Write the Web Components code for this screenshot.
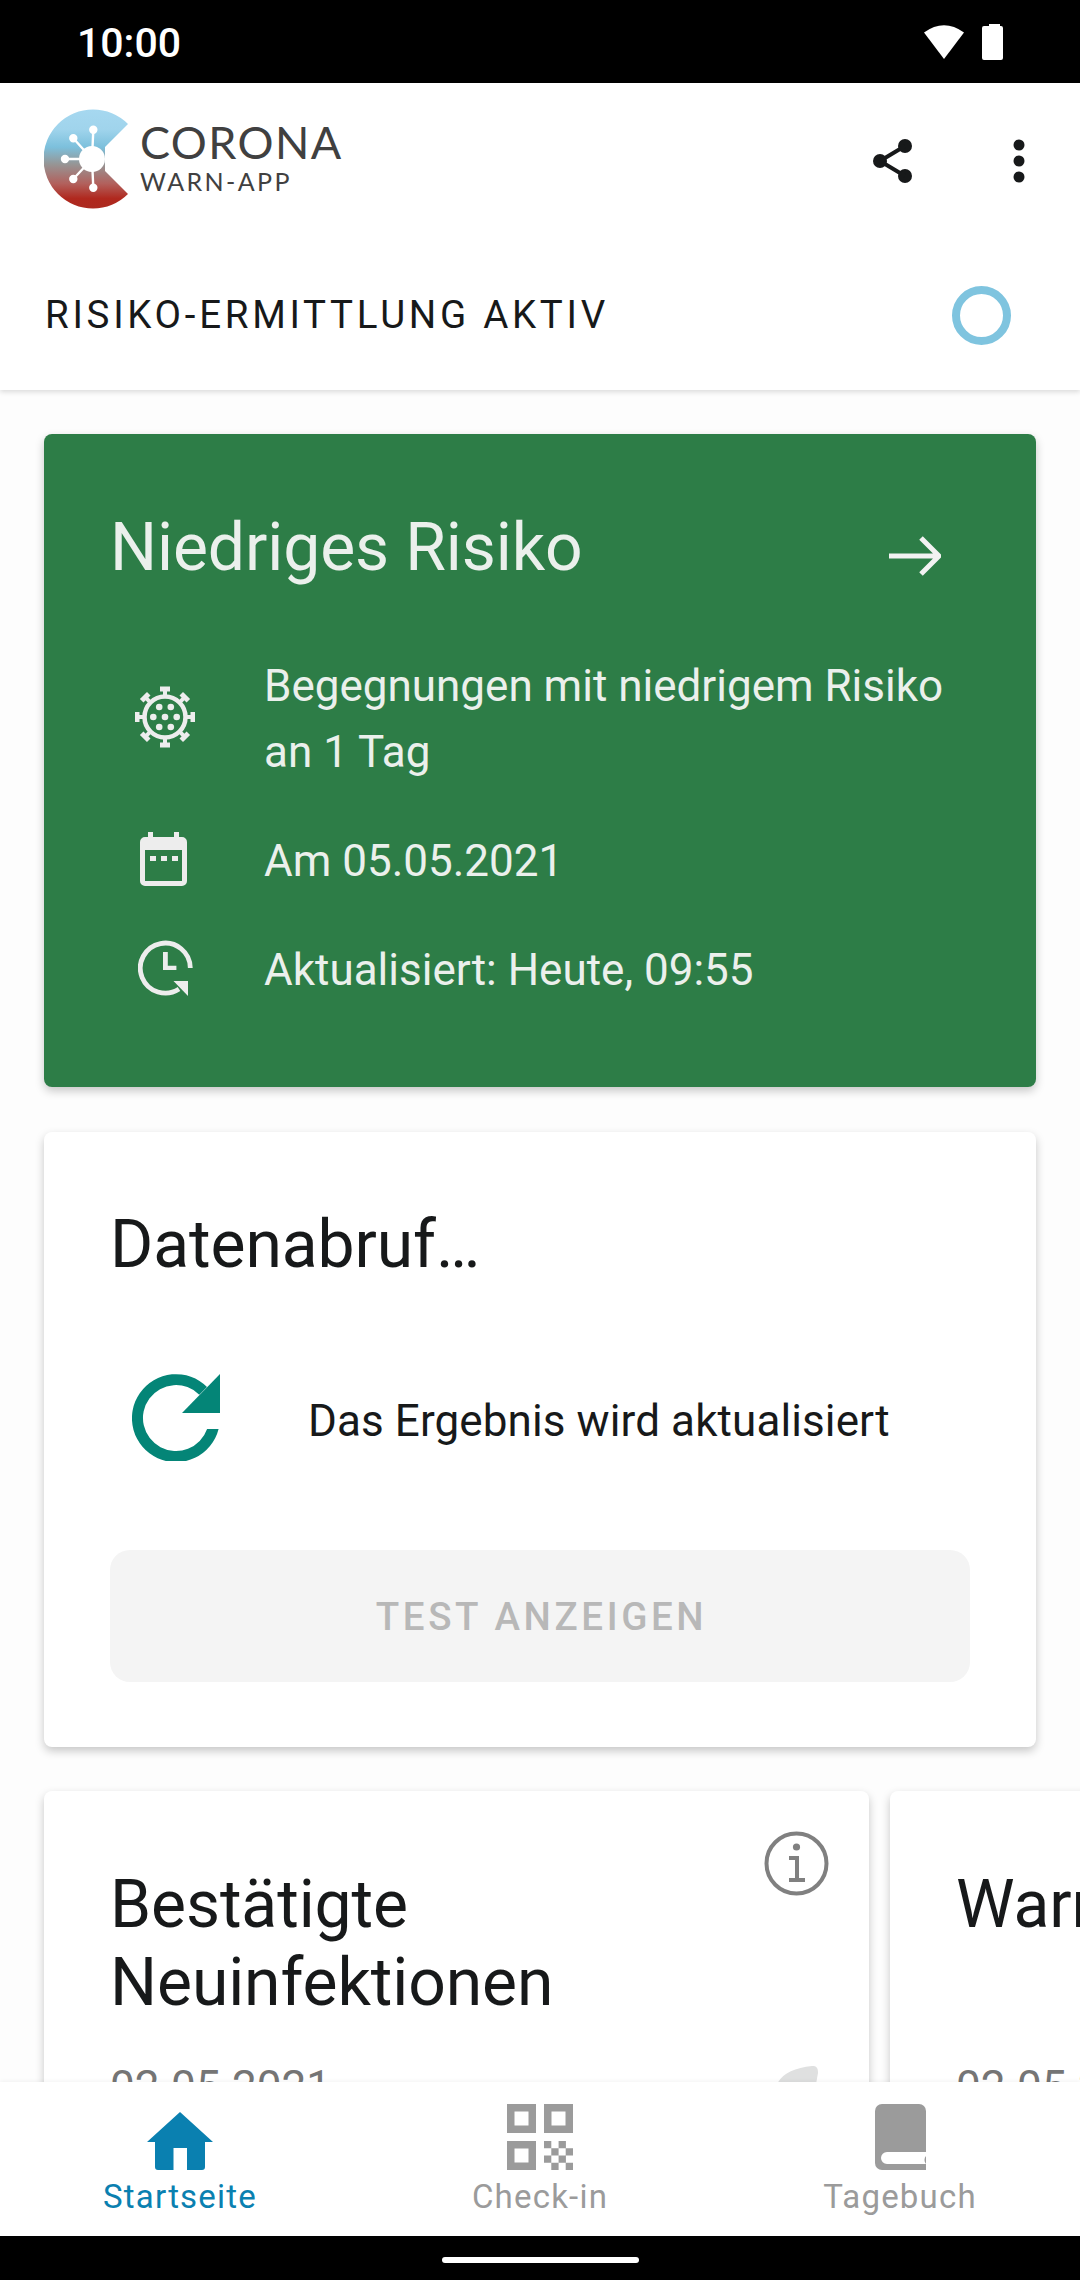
<!DOCTYPE html>
<html lang="de">
<head>
<meta charset="UTF-8">
<title>Corona-Warn-App</title>
<style>
    html, body { margin: 0; background: #000; }
    body { font-family: Roboto, "Liberation Sans", sans-serif; }
</style>
</head>
<body>

<cwa-app>
    <cwa-status-bar slot="top" time="10:00"></cwa-status-bar>
    <cwa-header slot="top" label="RISIKO-ERMITTLUNG AKTIV"></cwa-header>

    <risk-card title="Niedriges Risiko">
        <risk-row icon="virus">Begegnungen mit niedrigem Risiko<br>an 1 Tag</risk-row>
        <risk-row icon="calendar">Am 05.05.2021</risk-row>
        <risk-row icon="clock">Aktualisiert: Heute, 09:55</risk-row>
    </risk-card>

    <data-card title="Datenabruf…" text="Das Ergebnis wird aktualisiert" button="TEST ANZEIGEN"></data-card>

    <stat-row>
        <stat-card date="02.05.2021" info>Bestätigte<br>Neuinfektionen</stat-card>
        <stat-card date="02.05.2021">Warnende Personen</stat-card>
    </stat-row>

    <bottom-nav slot="bottom">
        <nav-item icon="home" active>Startseite</nav-item>
        <nav-item icon="qr">Check-in</nav-item>
        <nav-item icon="book">Tagebuch</nav-item>
    </bottom-nav>
</cwa-app>

<script>
    const ICONS = {
        virus: `<svg width="60" height="62" viewBox="-30 -31 60 62" fill="#ededed">
            <circle r="20.5" fill="none" stroke="#ededed" stroke-width="4.5"/>
            ${[0, 45, 90, 135, 180, 225, 270, 315].map(a => `<g transform="rotate(${a})"><rect x="-2" y="-27" width="4" height="7"/><rect x="-5" y="-30.5" width="10" height="5"/></g>`).join('')}
            <circle cx="-5.8" cy="-10" r="3.3"/><circle cx="5.8" cy="-10" r="3.3"/>
            <circle cx="-11.7" r="3.3"/><circle r="3.3"/><circle cx="11.7" r="3.3"/>
            <circle cx="-5.8" cy="10" r="3.3"/><circle cx="5.8" cy="10" r="3.3"/>
        </svg>`,
        calendar: `<svg width="47" height="54" viewBox="0 0 47 54" style="margin-right:3px">
            <path fill="#ededed" fill-rule="evenodd" d="M8 0h5v5h21V0h5v5h3a5 5 0 0 1 5 5v39a5 5 0 0 1-5 5H5a5 5 0 0 1-5-5V10a5 5 0 0 1 5-5h3zM5 18v31h37V18z"/>
            <path fill="#ededed" d="M10 24h6v5h-6zM21 24h6v5h-6zM32 24h6v5h-6z"/>
        </svg>`,
        clock: `<svg width="55" height="56" viewBox="0 0 55 56" fill="#ededed">
            <path fill="none" stroke="#ededed" stroke-width="4.8" d="M52.3 28A25 25 0 1 0 41 49"/>
            <path d="M50 41v15L35.5 41z"/>
            <path d="M25 12h4.8v13.7h8.6V30H25z"/>
        </svg>`,
        home: `<svg width="66" height="58" viewBox="0 0 66 58" fill="#0a80b0">
            <path d="M33 0L66 30H58V55a3 3 0 0 1-3 3H40V36H26.500V58H11a3 3 0 0 1-3-3V30H0z"/>
        </svg>`,
        qr: `<svg width="66" height="66" viewBox="0 0 66 66" fill="#9b9b9b" fill-rule="evenodd">
            <path d="M0 0h29v29H0zM7.5 7.5v14h14v-14z"/>
            <path d="M37 0h29v29H37zM44.500 7.500v14h14v-14z"/>
            <path d="M0 37h29v29H0zM7.500 44.500v14h14v-14z"/>
            <path d="M37 37h7.300v7.300H37zM51.600 37h7.300v7.300h-7.300zM44.300 44.300h7.300v7.300h-7.300zM58.700 44.300H66v7.300h-7.300zM37 51.600h7.300v7.200H37zM51.600 51.600h7.300v7.200h-7.300zM44.300 58.800h7.300V66h-7.300zM58.700 58.800H66V66h-7.300z"/>
        </svg>`,
        book: `<svg width="51" height="66" viewBox="0 0 51 66">
            <path fill="#9b9b9b" d="M7 0h37a7 7 0 0 1 7 7v59H7a7 7 0 0 1-7-7V7a7 7 0 0 1 7-7z"/>
            <path fill="#fff" d="M12 48h39v4a6 6 0 0 0 0 8v0H12a6 6 0 0 1 0-12z"/>
        </svg>`
    };

    const LOGO = `<svg width="85" height="100" viewBox="0 0 85 100">
        <defs><linearGradient id="g" x1="0" y1="0" x2="0" y2="1">
            <stop offset="0" stop-color="#a6d8f0"/><stop offset=".2" stop-color="#a0d4ec"/>
            <stop offset=".38" stop-color="#7cc0dc"/><stop offset=".55" stop-color="#969696"/>
            <stop offset=".75" stop-color="#b2605c"/><stop offset=".9" stop-color="#b0281e"/><stop offset="1" stop-color="#ac2a20"/>
        </linearGradient></defs>
        <path fill="url(#g)" d="M84 15A49.500 49.500 0 1 0 84 85L61 62V38z"/>
        <g fill="#fff" stroke="#fff" stroke-width="2.400">
            <circle cx="48" cy="50" r="13" stroke="none"/>
            <path fill="none" d="M48 50L49.300 21M48 50L29.300 29.300M48 50H21M48 50L29.300 70M48 50L49.300 79"/>
            <circle cx="49.300" cy="20.700" r="3" /><circle cx="29.300" cy="29.300" r="3"/><circle cx="21" cy="50" r="3"/>
            <circle cx="29.300" cy="70" r="3"/><circle cx="49.300" cy="78.700" r="3"/>
        </g>
    </svg>`;

    customElements.define('cwa-app', class extends HTMLElement {
        constructor() {
            super();
            this.attachShadow({mode: 'open'}).innerHTML = `
                <style>
                    :host { display: flex; flex-direction: column; height: 2280px; width: 1080px; overflow: hidden; background: #fdfdfd; }
                    main { flex: 1; min-height: 0; overflow: hidden; padding-top: 44px; display: flex; flex-direction: column; gap: 45px; }
                    .home { height: 44px; background: #000; flex: none; display: flex; justify-content: center; padding-top: 21px; box-sizing: border-box; }
                    .home i { width: 197px; height: 6px; border-radius: 3px; background: #fff; }
                </style>
                <slot name="top"></slot>
                <main><slot></slot></main>
                <slot name="bottom"></slot>
                <div class="home"><i></i></div>`;
        }
    });

    customElements.define('cwa-status-bar', class extends HTMLElement {
        constructor() {
            super();
            this.attachShadow({mode: 'open'}).innerHTML = `
                <style>
                    :host { display: flex; align-items: center; height: 83px; background: #000; color: #fff; padding: 0 77px 0 77px; box-sizing: border-box; }
                    span { font: 500 41px Roboto, sans-serif; flex: 1; margin-top: 2px; }
                    svg { display: block; margin-top: 1px; }
                </style>
                <span></span>
                <svg width="79" height="36" viewBox="0 0 79 36" fill="#fff">
                    <path d="M0 8.500Q20-6 40 8.500L20 35z"/>
                    <path d="M58 4a2 2 0 0 1 2-2h5V0h11v2h1a2 2 0 0 1 2 2v30a2 2 0 0 1-2 2H60a2 2 0 0 1-2-2z"/>
                </svg>`;
            this.shadowRoot.querySelector('span').textContent = this.getAttribute('time');
        }
    });

    customElements.define('cwa-header', class extends HTMLElement {
        constructor() {
            super();
            this.attachShadow({mode: 'open'}).innerHTML = `
                <style>
                    :host { display: block; background: #fff; box-shadow: 0 2px 5px rgba(0,0,0,.14); position: relative; z-index: 1; }
                    .bar { display: flex; align-items: center; height: 154px; padding-left: 44px; box-sizing: border-box; padding-top: 2px; }
                    .logo { flex: none; display: block; }
                    .word { margin-left: 11px; font-family: Lato, "Open Sans", sans-serif; color: #404040; margin-top: -8px; }
                    .c { font-size: 45px; line-height: 47px; letter-spacing: 1.400px; }
                    .w { font-size: 25px; line-height: 30px; letter-spacing: 2.400px; }
                    .actions { margin-left: auto; display: flex; align-items: center; }
                    .actions svg { display: block; }
                    .risk { display: flex; align-items: center; height: 153px; padding: 0 69px 0 45px; }
                    .risk span { flex: 1; font: 400 38.500px Roboto, sans-serif; letter-spacing: 3.700px; color: #17191a; margin-top: 2px; }
                    .ring { width: 59px; height: 59px; border-radius: 50%; border: 8px solid #7fc4df; box-sizing: border-box; margin-top: 3px; }
                </style>
                <div class="bar">
                    <span class="logo">${LOGO}</span>
                    <div class="word"><div class="c">CORONA</div><div class="w">WARN-APP</div></div>
                    <div class="actions">
                        <svg width="40" height="44" viewBox="0 0 40 44" fill="#17191a" style="margin-right:100px">
                            <circle cx="32" cy="7" r="7"/><circle cx="7" cy="22" r="7"/><circle cx="32" cy="37" r="7"/>
                            <path d="M7 22L32 7M7 22L32 37" stroke="#17191a" stroke-width="4" fill="none"/>
                        </svg>
                        <svg width="12" height="44" viewBox="0 0 12 44" fill="#17191a" style="margin-right:55px">
                            <circle cx="6" cy="6" r="5.500"/><circle cx="6" cy="22" r="5.500"/><circle cx="6" cy="38" r="5.500"/>
                        </svg>
                    </div>
                </div>
                <div class="risk"><span></span><div class="ring"></div></div>`;
            this.shadowRoot.querySelector('.risk span').textContent = this.getAttribute('label');
        }
    });

    customElements.define('risk-card', class extends HTMLElement {
        constructor() {
            super();
            this.attachShadow({mode: 'open'}).innerHTML = `
                <style>
                    :host { display: block; flex: none; margin: 0 44px; height: 653px; box-sizing: border-box; padding: 75px 66px 0; background: #2d7d47; border-radius: 8px; color: #ebf0ec; box-shadow: 0 4px 10px rgba(0,0,0,.22); }
                    header { display: flex; align-items: center; justify-content: space-between; font: 400 66px/78px Roboto, sans-serif; letter-spacing: -.1px; }
                    header svg { display: block; margin-right: 29px; margin-top: 16px; }
                    .rows { display: flex; flex-direction: column; gap: 43px; margin-top: 66px; }
                </style>
                <header><span></span>
                    <svg width="52" height="40" viewBox="0 0 52 40" fill="none" stroke="#f2f2f2" stroke-width="5"><path d="M0 20H49M32 2L50 20L32 38"/></svg>
                </header>
                <div class="rows"><slot></slot></div>`;
            this.shadowRoot.querySelector('header span').textContent = this.getAttribute('title');
        }
    });

    customElements.define('risk-row', class extends HTMLElement {
        constructor() {
            super();
            this.attachShadow({mode: 'open'}).innerHTML = `
                <style>
                    :host { display: grid; grid-template-columns: 110px 1fr; column-gap: 44px; align-items: center; font: 400 44px/66px Roboto, sans-serif; color: #ebf0ec; }
                    .i { display: flex; justify-content: center; margin-bottom: 5px; }
                    svg { display: block; }
                </style>
                <div class="i">${ICONS[this.getAttribute('icon')]}</div>
                <div><slot></slot></div>`;
        }
    });

    customElements.define('data-card', class extends HTMLElement {
        constructor() {
            super();
            this.attachShadow({mode: 'open'}).innerHTML = `
                <style>
                    :host { display: block; flex: none; margin: 0 44px; height: 615px; box-sizing: border-box; padding: 74px 66px 0; background: #fff; border-radius: 8px; box-shadow: 0 4px 10px rgba(0,0,0,.22); color: #17191a; }
                    h2 { margin: 0; font: 400 66px/78px Roboto, sans-serif; letter-spacing: -.1px; }
                    .row { display: flex; align-items: center; margin-top: 90px; padding-left: 22px; font: 400 44px/66px Roboto, sans-serif; letter-spacing: .1px; height: 87px; }
                    .row svg { flex: none; margin-right: 88px; display: block; }
                    .row span { margin-top: 6px; }
                    button { display: block; width: 100%; height: 132px; margin-top: 89px; border: 0; border-radius: 20px; background: #f4f4f4; color: #b8b8b8; font: 500 38.500px Roboto, sans-serif; letter-spacing: 3.600px; padding: 0 0 0 3px; }
                </style>
                <h2></h2>
                <div class="row">
                    <svg width="88" height="87" viewBox="0 0 88 87" fill="#048577">
                        <path d="M86.600 55A44 44 0 1 1 75 13L67.300 20.700A33 33 0 1 0 75.100 55z"/>
                        <path d="M88 0V39H50z"/>
                    </svg>
                    <span></span>
                </div>
                <button></button>`;
            const r = this.shadowRoot;
            r.querySelector('h2').textContent = this.getAttribute('title');
            r.querySelector('.row span').textContent = this.getAttribute('text');
            r.querySelector('button').textContent = this.getAttribute('button');
        }
    });

    customElements.define('stat-row', class extends HTMLElement {
        constructor() {
            super();
            this.attachShadow({mode: 'open'}).innerHTML = `
                <style>
                    :host { display: flex; gap: 21px; padding-left: 44px; flex: none; height: 400px; margin-top: -1px; }
                </style>
                <slot></slot>`;
        }
    });

    customElements.define('stat-card', class extends HTMLElement {
        constructor() {
            super();
            const info = this.hasAttribute('info');
            this.attachShadow({mode: 'open'}).innerHTML = `
                <style>
                    :host { display: block; flex: none; width: 825px; height: 500px; box-sizing: border-box; padding: 75px 51px 0 66px; background: #fff; border-radius: 8px; box-shadow: 0 4px 10px rgba(0,0,0,.22); color: #17191a; position: relative; }
                    h2 { margin: 0; font: 400 66px/78px Roboto, sans-serif; letter-spacing: -.1px; height: 156px; }
                    .date { display: flex; justify-content: space-between; margin-top: 32px; font: 400 44px/66px Roboto, sans-serif; color: #757575; }
                    .info { position: absolute; top: 40px; right: 40px; display: block; }
                    .blob { display: block; margin-top: 12px; }
                </style>
                ${info ? `<svg class="info" width="65" height="65" viewBox="0 0 65 65" fill="none" stroke="#808080" stroke-width="4">
                    <circle cx="32.500" cy="32.500" r="30"/>
                    <circle cx="32.500" cy="16" r="3.600" fill="#808080" stroke="none"/>
                    <path d="M25 27H33V49M25 49H41"/>
                </svg>` : ''}
                <h2><slot></slot></h2>
                <div class="date"><span></span>
                    ${info ? `<svg class="blob" width="42" height="40" viewBox="0 0 42 40"><path fill="#dfe0e0" d="M0 22C2 10 16 2 36 0c5-.5 6 3 6 7L36 40H2z"/></svg>` : ''}
                </div>`;
            this.shadowRoot.querySelector('.date span').textContent = this.getAttribute('date');
        }
    });

    customElements.define('bottom-nav', class extends HTMLElement {
        constructor() {
            super();
            this.attachShadow({mode: 'open'}).innerHTML = `
                <style>
                    :host { display: grid; grid-template-columns: repeat(3, 1fr); height: 154px; flex: none; background: #fff; position: relative; z-index: 2; box-shadow: 0 -1px 4px rgba(0,0,0,.05); }
                </style>
                <slot></slot>`;
        }
    });

    customElements.define('nav-item', class extends HTMLElement {
        constructor() {
            super();
            const active = this.hasAttribute('active');
            this.attachShadow({mode: 'open'}).innerHTML = `
                <style>
                    :host { display: flex; flex-direction: column; align-items: center; padding-top: 22px; box-sizing: border-box; font: 400 33px/40px Roboto, sans-serif; letter-spacing: 1.200px; color: ${active ? '#0a80b0' : '#9b9b9b'}; }
                    .i { height: 66px; display: flex; align-items: flex-end; }
                    svg { display: block; }
                    .l { margin-top: 7px; }
                </style>
                <div class="i">${ICONS[this.getAttribute('icon')]}</div>
                <div class="l"><slot></slot></div>`;
        }
    });
</script>

</body>
</html>
